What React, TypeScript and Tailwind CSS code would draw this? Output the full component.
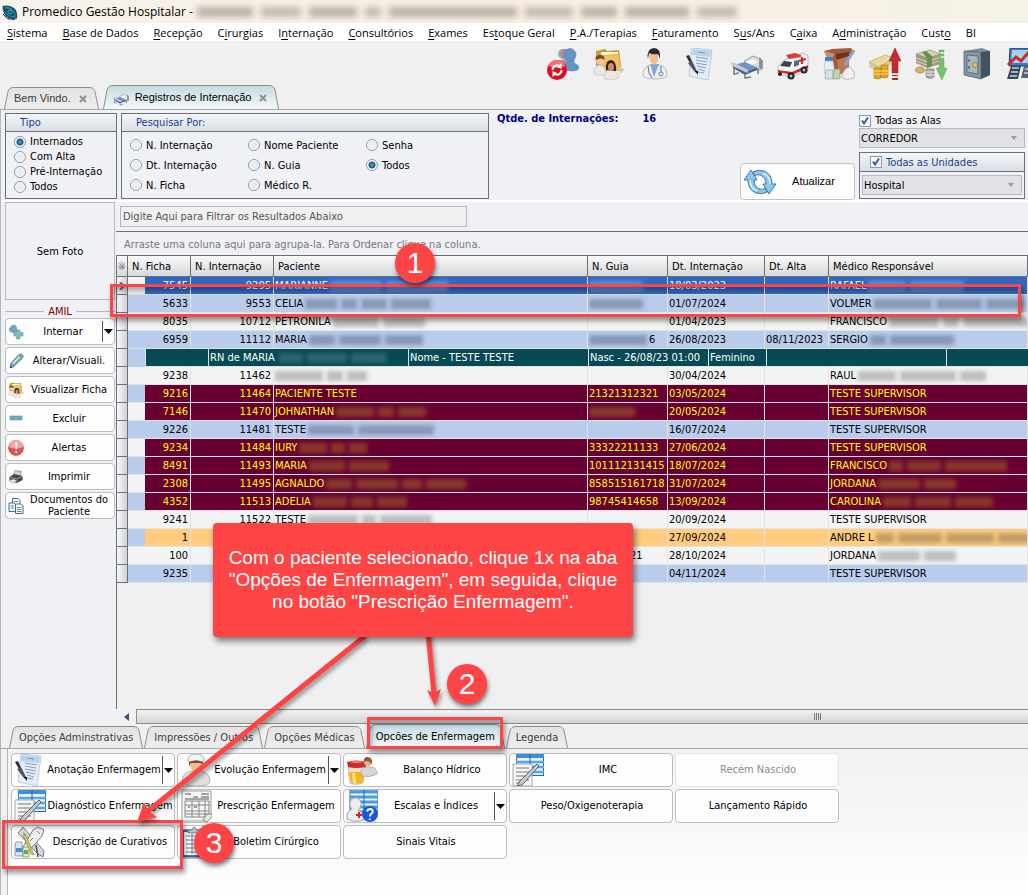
import type { ReactNode } from 'react';

/* ---------- icons ---------- */

const Svg = ({ children, className = 'h-8 w-8' }: { children: ReactNode; className?: string }) => (
  <svg viewBox="0 0 32 32" className={`${className} shrink-0`} aria-hidden="true">
    {children}
  </svg>
);

const LogoIcon = () => (
  <Svg className="h-4 w-4">
    <path d="M1 4Q14 1 24 8Q32 14 30 29Q16 32 8 25Q1 17 1 4Z" fill="#0f5570" />
    <path d="M5 8Q16 6 24 17M10 6Q22 8 27 25M6 17Q14 26 26 26" fill="none" stroke="#3c8ba6" strokeWidth="2" />
    <circle cx="16" cy="16" r="4" fill="none" stroke="#6cb4c8" strokeWidth="1.500" />
    <path d="M2 20L10 29L26 31" fill="none" stroke="#0a3346" strokeWidth="2" />
  </Svg>
);

const UsersIcon = () => (
  <Svg>
    <g fill="#8fbf86">
      <circle cx="16" cy="6" r="5" />
      <path d="M11 22Q10 12 17 11L20 22Z" />
    </g>
    <g fill="#b583b4">
      <circle cx="18" cy="6" r="5" />
      <path d="M13 22Q12 12 19 11L22 22Z" />
    </g>
    <g fill="#6593c2" stroke="#507fb0" strokeWidth=".5">
      <path d="M15 22Q14 18 20 15L20 10H27L27 15Q32 17 32 20Q31 23 25 23Z" />
      <ellipse cx="23" cy="7" rx="6" ry="6.500" />
    </g>
    <circle cx="10" cy="22" r="10" fill="#d9101f" />
    <path d="M1.500 18A9 9 0 0 1 18.500 18Q10 22 1.500 18Z" fill="#f0747c" />
    <path d="M5.500 22A4.500 4.500 0 0 1 13 18.500M14.500 22A4.500 4.500 0 0 1 7 25.500" fill="none" stroke="#fff" strokeWidth="2" />
    <path d="M14.500 15V21L10 19ZM5.500 29V23L10 25Z" fill="#fff" />
  </Svg>
);

const FolderPeopleIcon = () => (
  <Svg>
    <path d="M3 3L12 1L14 3L26 2L28 18L8 22L3 18Z" fill="#c99a3c" />
    <path d="M8 4L25 4L25 18L8 20Z" fill="#fff7dc" />
    <path d="M8 8L26 6L28 22L10 24Z" fill="#eec35e" stroke="#c79a3f" strokeWidth=".6" />
    <path d="M1 25Q1 17 7 17Q13 18 13 27H3Z" fill="#e6e9ee" stroke="#aab" strokeWidth=".5" />
    <circle cx="7" cy="12" r="4.500" fill="#f0c39c" />
    <path d="M2.500 12Q2 7 7 7Q12 7 11.500 12Q9 9 2.500 12Z" fill="#7a4a26" />
    <path d="M11 31Q11 22 18 22Q25 22 26 30Q19 33 11 31Z" fill="#f1e3e3" stroke="#bba" strokeWidth=".5" />
    <path d="M13 22Q12 12 18 12Q24 13 23 23Z" fill="#33201b" />
    <ellipse cx="18" cy="19" rx="3" ry="4" fill="#c98e6c" />
    <path d="M26 20L32 21L27 26Z" fill="#d5c7ae" />
  </Svg>
);

const DoctorIcon = () => (
  <Svg>
    <path d="M4 27Q4 18 12 17H20Q28 18 28 27Q27 31 16 31Q5 31 4 27Z" fill="#eceef1" stroke="#a4a8ae" strokeWidth=".7" />
    <path d="M11 16L15 29L20 16Z" fill="#7ca9d9" />
    <path d="M10 6H19V13Q15 20 11 13Z" fill="#edbd93" />
    <path d="M9 11Q7 1 15 0Q22 0 21 11L19 6Q13 7 10 5Z" fill="#25282c" />
    <path d="M9 18Q9 26 13 30M22 18V24M22 24A2 2 0 1 1 21.900 24" fill="none" stroke="#6d747d" strokeWidth="1" />
  </Svg>
);

const DocumentIcon = () => (
  <Svg>
    <path d="M7 0L27 2L23 32L4 28Z" fill="#e3eef8" stroke="#a6bccf" strokeWidth=".7" />
    <path d="M8 1L26 3L25 9L7 7Z" fill="#b5d5ee" />
    <path d="M13 4L20 5M11 9L23 11M11 12L22 14M11 15L22 17M12 18L21 20M13 21L20 23M13 24L19 25" stroke="#7c93a9" strokeWidth=".9" />
    <path d="M1 8L4 7L12 25L10 24Z" fill="#2a3038" />
    <path d="M3 15L7 13L12 23L9 23Z" fill="#4e5864" />
    <path d="M10 23L13 27L13 23Z" fill="#111" />
  </Svg>
);

const BedIcon = ({ className }: { className?: string }) => (
  <Svg className={className}>
    <path d="M13 13L22 8L30 11V22L22 22Z" fill="#d9dcdf" stroke="#8b9095" strokeWidth=".8" />
    <path d="M14 14L22 11L27 14L20 18Z" fill="#f6f8f9" />
    <path d="M2 17L14 14L25 19L14 24Z" fill="#6f93c7" />
    <path d="M2 17L14 24V27L2 20ZM14 24L26 19V22L14 27Z" fill="#47649a" />
    <path d="M0 14L4 15L17 22V25L1 18Z" fill="#c6cbd0" />
    <path d="M3 20V26L8 25M14 27V30L20 29M27 20V26M29 10V20M31 12V21" stroke="#777d83" strokeWidth="1.500" fill="none" />
  </Svg>
);

const AmbulanceIcon = () => (
  <Svg>
    <path d="M1 18L6 13L12 10L26 5L31 8V22L15 29L1 26Z" fill="#f5f5f5" stroke="#999" strokeWidth=".6" />
    <path d="M9 7L18 5L24 7V9L12 11Z" fill="#db3b3b" />
    <path d="M3 18L7 13L15 14L13 19Z" fill="#33434f" />
    <path d="M17 13L22 12V17L17 19Z" fill="#556b79" />
    <path d="M1 22L15 24L31 17V20L15 27L1 24Z" fill="#d82525" />
    <path d="M25 9V16M22 13L29 11" stroke="#dd2525" strokeWidth="2.200" />
    <circle cx="14" cy="28" r="3.500" fill="#222" />
    <circle cx="27" cy="22" r="3.500" fill="#222" />
    <circle cx="3" cy="26" r="2" fill="#222" />
    <circle cx="14" cy="28" r="1.500" fill="#bbb" />
    <circle cx="27" cy="22" r="1.500" fill="#bbb" />
  </Svg>
);

const SuppliesIcon = () => (
  <Svg>
    <path d="M1 3L9 1L28 0L31 5L26 8V25L8 26L5 10Z" fill="#a5593a" />
    <path d="M1 3L12 6L8 12L3 8Z" fill="#c98d6c" />
    <path d="M12 6L26 4L26 8L14 12Z" fill="#6d3422" />
    <path d="M14 12L26 8V24L16 26Z" fill="#bf7754" />
    <rect x="2" y="9" width="8" height="4" fill="#4d7ec1" />
    <path d="M2 13H10L12 25H1Z" fill="#e6edf5" stroke="#9ab" strokeWidth=".5" />
    <path d="M31 2L22 17" stroke="#8aa5c7" strokeWidth="3" />
    <path d="M3 22H10V31H2Z" fill="#d9dee3" stroke="#888" strokeWidth=".5" />
    <path d="M11 21H17V31H10Z" fill="#bcd3a4" stroke="#687" strokeWidth=".5" />
    <path d="M19 27Q22 19 27 19Q33 25 31 30Q24 33 19 30Z" fill="#f1f1f1" stroke="#999" strokeWidth=".6" />
  </Svg>
);

const MoneyUpIcon = () => (
  <Svg>
    <path d="M0 14L16 7L25 10L10 19Z" fill="#ead9a2" stroke="#bda86a" strokeWidth=".7" />
    <path d="M0 14L10 19V24L0 19ZM10 19L25 10V15L10 24Z" fill="#cdb97c" />
    <path d="M0 16L10 21L25 12M0 18L10 23L25 14" stroke="#f4efda" strokeWidth=".7" fill="none" />
    <path d="M5 20H12V30Q8 32 5 30ZM12 17H19V29Q15 31 12 29Z" fill="#e1a51d" stroke="#a8750e" strokeWidth=".6" />
    <path d="M5 23H19M5 26H19" stroke="#f9de7d" strokeWidth="1" />
    <path d="M26 0L32 13H29V25H23V13H20Z" fill="#c62a2f" stroke="#8e181c" strokeWidth=".5" />
    <path d="M23 27H29V28H23ZM23 30H29V32H23Z" fill="#b02328" />
  </Svg>
);

const MoneyDownIcon = () => (
  <Svg>
    <path d="M1 6L15 2L26 6V16L12 20L1 15Z" fill="#a69a7d" />
    <path d="M1 6L15 2L26 6L12 10Z" fill="#d8cfb4" stroke="#877c61" strokeWidth=".5" />
    <path d="M1 10L12 14L26 9M1 13L12 17L26 12" stroke="#e7e0ca" strokeWidth=".8" fill="none" />
    <path d="M7 4L11 3L17 8V18L12 20V10Z" fill="#5f9449" />
    <ellipse cx="5" cy="22" rx="4.500" ry="3" fill="#cfb468" stroke="#8e7734" strokeWidth=".6" />
    <path d="M11 21H19V29Q15 32 11 29Z" fill="#a9aaa6" stroke="#666" strokeWidth=".6" />
    <path d="M11 24H19M11 27H19" stroke="#eee" strokeWidth="1" />
    <path d="M24 2H29V4H24ZM24 6H29V8H24ZM24 10H29V20H32L27 32L21 20H24Z" fill="#75c46b" stroke="#4c9a45" strokeWidth=".4" />
  </Svg>
);

const SafeIcon = () => (
  <Svg>
    <path d="M3 3L21 0L29 3L29 27L20 31L3 27Z" fill="#7d909f" />
    <path d="M20 4L29 3V27L20 31Z" fill="#43525f" />
    <path d="M3 3L20 4V31L3 27Z" fill="#8496a6" stroke="#4d5c69" strokeWidth=".7" />
    <path d="M6 7L17 8V26L6 24Z" fill="#aab7c2" stroke="#52616d" strokeWidth=".8" />
    <circle cx="14" cy="17" r="2.500" fill="#e5c26b" stroke="#8e6d23" strokeWidth=".7" />
    <path d="M8 11V14M8 18V21" stroke="#44525e" strokeWidth="1.200" />
  </Svg>
);

const ChartIcon = () => (
  <Svg>
    <path d="M3 0H32V18H2Z" fill="#3d79c4" stroke="#1f3f66" />
    <path d="M5 2H32V15H4Z" fill="#9ed6f3" />
    <path d="M1 17L9 9L14 13L21 5L32 12" fill="none" stroke="#d22a23" strokeWidth="3" />
    <path d="M4 18H14L11 31H0Z" fill="#3a4653" />
    <path d="M5 20H12M4 24H11M3 28H10" stroke="#c7d2dd" strokeWidth="1.500" />
    <path d="M17 18H31V30H14Z" fill="#56616d" />
    <path d="M18 21H30M17 25H30" stroke="#ccd" strokeWidth="1.500" />
  </Svg>
);

const RefreshIcon = () => (
  <Svg>
    <g fill="#8cc4ea" stroke="#34719f" strokeWidth=".9" strokeLinejoin="round">
      <path d="M7 4L13 14H10Q10 21 16 23Q19 24 21 22L23 26Q18 29 12 27Q4 24 4 14H0Z" />
      <path d="M25 28L19 18H22Q22 11 16 9Q13 8 11 10L9 6Q14 3 20 5Q28 8 28 18H32Z" />
    </g>
    <path d="M6 14Q6 22 13 25M26 18Q26 10 19 7" stroke="#d8effc" strokeWidth="1.500" fill="none" />
  </Svg>
);

const NurseIcon = () => (
  <Svg>
    <path d="M2 28Q2 19 11 17H21Q30 19 30 28Q29 32 16 32Q3 32 2 28Z" fill="#dfe0df" stroke="#a2a2a0" strokeWidth=".8" />
    <path d="M12 16L16 22L20 16Z" fill="#e3ab7b" />
    <path d="M10 7H22V12Q20 19 16 19Q12 19 10 12Z" fill="#edbf95" />
    <path d="M8 6Q8 0 16 0Q24 0 24 6L23 8Q16 5 9 8Z" fill="#f3f3f1" stroke="#9c9c98" strokeWidth=".8" />
    <path d="M9 8Q16 5 23 8V12L21 9H11L9 12Z" fill="#7f4a28" />
  </Svg>
);

const CupPersonIcon = () => (
  <Svg>
    <path d="M2 13H19L17 29Q10 32 4 29Z" fill="#f3e2cf" stroke="#b7a48e" strokeWidth=".7" />
    <path d="M3 18H18L17 28Q10 31 5 28Z" fill="#f6b51e" />
    <path d="M6 19H9L10 29H7Z" fill="#ffe483" />
    <path d="M1 8Q10 5 20 8V13Q10 15 2 13Z" fill="#d12a2a" />
    <path d="M3 8Q10 6 18 8Q10 10 3 8Z" fill="#ee8079" />
    <path d="M15 19Q15 14 20 13H26Q31 14 31 20Q24 24 16 22Z" fill="#d5d7d9" stroke="#989b9f" strokeWidth=".7" />
    <circle cx="22" cy="8" r="4" fill="#e3b083" />
    <path d="M18 8Q17 3 22 3Q27 4 26 10Q22 5 18 8Z" fill="#855b38" />
  </Svg>
);

const TableNotesIcon = () => (
  <Svg>
    <rect x="4.500" y=".5" width="27" height="21" fill="#e9f5ff" stroke="#2268b1" />
    <rect x="4" y="0" width="28" height="4" fill="#3d8ed6" />
    <path d="M4 8H32M4 13H32M4 18H32" stroke="#58a5e8" strokeWidth="2.500" />
    <path d="M18 0V22" stroke="#2268b1" />
    <path d="M1 10H20V32H1Z" fill="#f4f4f4" stroke="#979797" strokeWidth=".8" />
    <path d="M4 14H17M4 18H17M4 22H17M4 26H17M4 29H12" stroke="#777" />
    <path d="M25 10L27 12L10 31L5 32L8 27Z" fill="#c6cbd0" stroke="#4b5157" strokeWidth=".9" />
  </Svg>
);

const FormIcon = () => (
  <Svg>
    <path d="M2 1H31V26L26 31H2Z" fill="#f5f5f4" stroke="#9b9b98" />
    <path d="M5 4H11M13 7H18M21 4H29M21 7H29M5 9H29" stroke="#555" />
    <path d="M5 11H29V27H5ZM5 15H29M5 21H29M5 24H29M12 11V27M19 11V27M25 11V27" fill="none" stroke="#868684" />
    <path d="M8 17H10M14 17H17" stroke="#333" />
    <path d="M23 30L27 24H32V27L27 32Z" fill="#e5e5e3" stroke="#777" strokeWidth=".8" />
  </Svg>
);

const ClipboardIcon = () => (
  <Svg>
    <rect x="1" y="4" width="26" height="27" rx="1" fill="#4d71a9" stroke="#294a7c" />
    <path d="M4 6H24V29H4Z" fill="#f8fafc" />
    <path d="M6 10H22M6 14H22M6 18H22M6 22H22M6 26H22M12 8V28" stroke="#707b8b" />
    <path d="M8 4H12Q14 -2 16 4H20V7H8Z" fill="#b9c0c8" stroke="#667" strokeWidth=".8" />
    <path d="M2 10V28" stroke="#19304f" strokeWidth="1.500" />
  </Svg>
);

const PatientHelpIcon = () => (
  <Svg>
    <rect x="4" y="0" width="28" height="21" fill="#e9f5ff" stroke="#2268b1" />
    <path d="M4 2H32M4 7H32M4 12H32M4 17H32" stroke="#4c9ae0" strokeWidth="2.800" />
    <path d="M18 0V22" stroke="#2268b1" />
    <path d="M1 29Q0 22 6 19Q3 17 4 12Q6 7 11 8Q16 10 15 16Q14 19 12 20Q18 22 18 30Q8 33 1 29Z" fill="#eceded" stroke="#9fa3a7" />
    <path d="M13 22V28M10 25H16" stroke="#e11d1d" strokeWidth="2" />
    <circle cx="24" cy="24" r="8" fill="#1559e0" />
    <path d="M21 21.500Q21.500 19 24.500 19Q27.500 19.500 26.500 22.500Q24 24 24 26.500M23.800 28.500V30" stroke="#fff" strokeWidth="1.900" fill="none" />
  </Svg>
);

const ToolsIcon = () => (
  <Svg>
    <path d="M4 7L9 1L30 25L29 31L24 28Z" fill="#d5d7d9" stroke="#777b80" />
    <path d="M19 4L24 1L30 4L28 10L12 28L6 26Z" fill="#eceded" stroke="#777b80" />
    <path d="M23 5L26 8M9 7L12 9M19 12L16 15" stroke="#777b80" />
    <path d="M9 9L12 9L20 29L17 28Z" fill="#e3c45b" stroke="#8b7c42" strokeWidth=".7" />
    <path d="M2 16H8V19L9 30H1V19Z" fill="#d8e5f2" stroke="#758ca4" strokeWidth=".8" />
    <rect x="2" y="22" width="6" height="4" fill="#4c8fd0" />
    <path d="M9 21H15V31H9Z" fill="#d7ebd0" stroke="#7b9270" strokeWidth=".8" />
    <rect x="10" y="24" width="4" height="4" fill="#64a84f" />
    <path d="M22 19L24 31" stroke="#44484c" strokeWidth="1.500" />
  </Svg>
);

const AddIcon = () => (
  <Svg className="h-4 w-4">
    <path d="M7 3L13 1L18 6V13L13 18L6 17L1 11Z" fill="#6fa5b5" />
    <path d="M17 12H24V17H30V24H24V30H17V24H12V17H17Z" fill="#86b9c8" stroke="#4e8597" />
  </Svg>
);

const PencilIcon = () => (
  <Svg className="h-4 w-4">
    <path d="M4 30L6 20L22 3Q27 0 30 5Q31 8 28 11L12 27Z" fill="#78a9b7" stroke="#3f7686" strokeWidth="1.500" />
    <path d="M10 21L23 8" stroke="#e3f1f4" strokeWidth="3" />
    <path d="M4 30L5 25L9 29Z" fill="#2d4f5a" />
  </Svg>
);

const MinusIcon = () => (
  <Svg className="h-4 w-4">
    <rect x="4" y="10" width="24" height="8" fill="#6ea9b8" stroke="#4f8d9e" />
  </Svg>
);

const AlertIcon = () => (
  <Svg className="h-4 w-4">
    <circle cx="16" cy="16" r="15" fill="#e2504f" stroke="#c33" />
    <path d="M2 14A14 14 0 0 1 30 14Q16 20 2 14Z" fill="#f4a3a0" />
    <path d="M14 5H19L18 19H15ZM15 22H18V26H15Z" fill="#fff" />
  </Svg>
);

const PrinterIcon = () => (
  <Svg className="h-4 w-4">
    <path d="M14 3L27 5L24 15L11 13Z" fill="#ccd3d8" stroke="#555" />
    <path d="M3 16L12 10L29 14V22L18 28L3 23Z" fill="#40474d" />
    <path d="M3 16L18 20L29 14" stroke="#9aa2a8" strokeWidth="2" fill="none" />
    <path d="M2 23L11 20L19 24L9 28Z" fill="#e9ecee" stroke="#777" />
  </Svg>
);

const CopiesIcon = () => (
  <Svg className="h-4 w-4">
    <g fill="#f7fafc" stroke="#496b88" strokeWidth="2">
      <path d="M9 1H20L24 5V20H9Z" />
      <path d="M2 10H12L16 14V27H2Z" />
      <path d="M15 12H25L30 16V31H15Z" />
    </g>
    <path d="M12 7H20M5 16H12M5 20H12M18 19H27M18 23H27M18 27H27" stroke="#6b8ba5" strokeWidth="2" />
  </Svg>
);

/* ---------- data ---------- */

const menus = [
  ['', 'S', 'istema'],
  ['', 'B', 'ase de Dados'],
  ['', 'R', 'ecepção'],
  ['C', 'i', 'rurgias'],
  ['I', 'n', 'ternação'],
  ['', 'C', 'onsultórios'],
  ['', 'E', 'xames'],
  ['Es', 't', 'oque Geral'],
  ['', 'P', '.A./Terapias'],
  ['', 'F', 'aturamento'],
  ['S', 'u', 's/Ans'],
  ['C', 'a', 'ixa'],
  ['A', 'd', 'ministração'],
  ['Cust', 'o', ''],
  ['BI', '', ''],
];

const toolbar = [
  { name: 'Usuários', icon: <UsersIcon /> },
  { name: 'Pacientes', icon: <FolderPeopleIcon /> },
  { name: 'Médicos', icon: <DoctorIcon /> },
  { name: 'Prontuário', icon: <DocumentIcon /> },
  { name: 'Internação', icon: <BedIcon /> },
  { name: 'Pronto Atendimento', icon: <AmbulanceIcon /> },
  { name: 'Estoque', icon: <SuppliesIcon /> },
  { name: 'Contas a Pagar', icon: <MoneyUpIcon /> },
  { name: 'Contas a Receber', icon: <MoneyDownIcon /> },
  { name: 'Caixa', icon: <SafeIcon /> },
  { name: 'Gráficos', icon: <ChartIcon /> },
];

type Tone = 'selected' | 'blue' | 'white' | 'wine' | 'amber';

type Row = {
  ficha: string;
  internacao: string;
  paciente: string;
  pacienteMask?: number[];
  guia?: string;
  guiaMask?: number[];
  guiaEnd?: string;
  data: string;
  alta?: string;
  medico: string;
  medicoMask?: number[];
  tone: Tone;
  lead?: 'blue' | 'white';
};

const rows: Row[] = [
  { ficha: '7545', internacao: '9295', paciente: 'MARIANNE', pacienteMask: [52, 62], guiaMask: [54], data: '18/03/2023', medico: 'RAFAEL', medicoMask: [38, 54], tone: 'selected', lead: 'white' },
  { ficha: '5633', internacao: '9553', paciente: 'CELIA', pacienteMask: [32, 16, 26, 40], guiaMask: [54], data: '01/07/2024', medico: 'VOLMER', medicoMask: [58, 46, 38], tone: 'blue' },
  { ficha: '8035', internacao: '10712', paciente: 'PETRONILA', pacienteMask: [46, 42], data: '01/04/2023', medico: 'FRANCISCO', medicoMask: [50, 16, 68], tone: 'white' },
  { ficha: '6959', internacao: '11112', paciente: 'MARIA', pacienteMask: [26, 42, 38], guiaMask: [58], guiaEnd: '6', data: '26/08/2023', alta: '08/11/2023', medico: 'SERGIO', medicoMask: [16, 64], tone: 'blue' },
  { ficha: '9238', internacao: '11462', paciente: '', pacienteMask: [48, 16, 20], data: '30/04/2024', medico: 'RAUL', medicoMask: [38, 56, 26], tone: 'white' },
  { ficha: '9216', internacao: '11464', paciente: 'PACIENTE TESTE', guia: '21321312321', data: '03/05/2024', medico: 'TESTE SUPERVISOR', tone: 'wine', lead: 'blue' },
  { ficha: '7146', internacao: '11470', paciente: 'JOHNATHAN', pacienteMask: [38, 16, 28], guiaMask: [46], data: '20/05/2024', medico: 'TESTE SUPERVISOR', tone: 'wine', lead: 'white' },
  { ficha: '9226', internacao: '11481', paciente: 'TESTE', pacienteMask: [46, 76], data: '16/07/2024', medico: 'TESTE SUPERVISOR', tone: 'blue' },
  { ficha: '9234', internacao: '11484', paciente: 'IURY', pacienteMask: [28, 14, 18], guia: '33322211133', data: '27/06/2024', medico: 'TESTE SUPERVISOR', tone: 'wine', lead: 'white' },
  { ficha: '8491', internacao: '11493', paciente: 'MARIA', pacienteMask: [36, 40], guia: '101112131415', data: '18/07/2024', medico: 'FRANCISCO', medicoMask: [14, 34, 62], tone: 'wine', lead: 'blue' },
  { ficha: '2308', internacao: '11495', paciente: 'AGNALDO', pacienteMask: [26, 42, 20, 40], guia: '858515161718', data: '31/07/2024', medico: 'JORDANA', medicoMask: [42, 32], tone: 'wine', lead: 'white' },
  { ficha: '4352', internacao: '11513', paciente: 'ADELIA', pacienteMask: [34, 22, 30], guia: '98745414658', data: '13/09/2024', medico: 'CAROLINA', medicoMask: [28, 36, 38], tone: 'wine', lead: 'blue' },
  { ficha: '9241', internacao: '11522', paciente: 'TESTE', pacienteMask: [50, 14, 52], data: '20/09/2024', medico: 'TESTE SUPERVISOR', tone: 'white' },
  { ficha: '1', internacao: '', paciente: '', data: '27/09/2024', medico: 'ANDRE L', medicoMask: [18, 44, 48, 40], tone: 'amber', lead: 'blue' },
  { ficha: '100', internacao: '', paciente: '', guiaMask: [39], guiaEnd: '21', data: '28/10/2024', medico: 'JORDANA', medicoMask: [42, 32], tone: 'white' },
  { ficha: '9235', internacao: '', paciente: '', data: '04/11/2024', medico: 'TESTE SUPERVISOR', tone: 'blue' },
];

const toneClass: Record<Tone, string> = {
  selected: 'bg-[#2f67c5] text-white',
  blue: 'bg-[#b9ccec] text-black',
  white: 'bg-[#f2f4f4] text-black',
  wine: 'bg-[#690032] text-[#ffff00]',
  amber: 'bg-[#ffcc80] text-black',
};

const maskClass: Record<Tone, string> = {
  selected: 'bg-[#7d9fdc]',
  blue: 'bg-[#7282a0]',
  white: 'bg-[#a5a7a8]',
  wine: 'bg-[#945026]',
  amber: 'bg-[#a98a5c]',
};

const sideButtons = [
  { label: 'Internar', icon: <AddIcon />, menu: true },
  { label: 'Alterar/Visuali.', icon: <PencilIcon /> },
  { label: 'Visualizar Ficha', icon: <span className="h-4 w-4 shrink-0 [&>svg]:h-4 [&>svg]:w-4"><FolderPeopleIcon /></span> },
  { label: 'Excluir', icon: <MinusIcon /> },
  { label: 'Alertas', icon: <AlertIcon /> },
  { label: 'Imprimir', icon: <PrinterIcon /> },
  { label: 'Documentos do Paciente', icon: <CopiesIcon /> },
];

const bottomTabs = ['Opções Adminstrativas', 'Impressões / Outros', 'Opções Médicas', 'Opcões de Enfermagem', 'Legenda'];

const nursingButtons = [
  { label: 'Anotação Enfermagem', icon: <DocumentIcon />, menu: true },
  { label: 'Evolução Enfermagem', icon: <NurseIcon />, menu: true },
  { label: 'Balanço Hídrico', icon: <CupPersonIcon /> },
  { label: 'IMC', icon: <TableNotesIcon /> },
  { label: 'Recém Nascido', disabled: true },
  { label: 'Diagnóstico Enfermagem', icon: <TableNotesIcon /> },
  { label: 'Prescrição Enfermagem', icon: <FormIcon /> },
  { label: 'Escalas e Índices', icon: <PatientHelpIcon />, menu: true },
  { label: 'Peso/Oxigenoterapia' },
  { label: 'Lançamento Rápido' },
  { label: 'Descrição de Curativos', icon: <ToolsIcon /> },
  { label: 'Boletim Cirúrgico', icon: <ClipboardIcon /> },
  { label: 'Sinais Vitais' },
];

/* ---------- controls ---------- */

const Radio = ({ name, label, checked }: { name: string; label: string; checked?: boolean }) => (
  <label className="flex items-center gap-1 whitespace-nowrap">
    <input
      type="radio"
      name={name}
      defaultChecked={checked}
      className="h-3 w-3 shrink-0 appearance-none rounded-full border border-[#8e9aa8] bg-[#e9edf3] shadow-[inset_0_0_0_1px_#fff] checked:bg-[radial-gradient(circle,#4fb0dc_0,#1c557c_3px,#e9f2f8_4px)]"
    />
    {label}
  </label>
);

const Check = ({ label }: { label: string }) => (
  <label className="flex items-center gap-1 whitespace-nowrap">
    <span className="grid h-3 w-3 shrink-0">
      <input type="checkbox" defaultChecked className="col-start-1 row-start-1 h-3 w-3 appearance-none border border-[#8e9aa8] bg-[#f3f6fa]" />
      <svg viewBox="0 0 12 12" className="pointer-events-none col-start-1 row-start-1 h-3 w-3" aria-hidden="true">
        <path d="M3 5.500L5 8.500L9 2.500" fill="none" stroke="#3b5f9b" strokeWidth="2" />
      </svg>
    </span>
    {label}
  </label>
);

const Combo = ({ label, value }: { label: string; value: string }) => (
  <div className="grid">
    <select
      aria-label={label}
      className="col-start-1 row-start-1 h-5 w-full appearance-none border border-[#b5b8c0] bg-[#e1e2e6] px-px text-black"
    >
      <option>{value}</option>
    </select>
    <svg viewBox="0 0 6 4" className="pointer-events-none col-start-1 row-start-1 mr-2 h-1 w-1.5 self-center justify-self-end" aria-hidden="true">
      <path d="M0 0H6L3 4Z" fill="#9a9ca2" />
    </svg>
  </div>
);

const groupTitle = 'border-b border-[#6d6f78] bg-linear-to-b from-[#f4f6f8] to-[#d9dee6] text-[#15428b]';

const Tab = ({ active, children }: { active?: boolean; children: ReactNode }) => {
  const id = active ? 'tab-on' : 'tab-off';
  const edge = active ? 'h-6' : 'h-[22px]';
  return (
    <div className={`flex items-stretch ${edge} ${active ? 'text-black' : 'text-[#3c3c3c]'}`}>
      <svg viewBox="0 0 10 24" preserveAspectRatio="none" className={`w-2.5 shrink-0 ${edge}`} aria-hidden="true">
        <defs>
          <linearGradient id={id} gradientUnits="userSpaceOnUse" x1="0" y1="0" x2="0" y2="24">
            <stop offset="0" stopColor={active ? '#c4dbe1' : '#e2e2e2'} />
            <stop offset="1" stopColor={active ? '#f4f8fa' : '#eeeeee'} />
          </linearGradient>
        </defs>
        <path d="M.5 24L4 5Q5 .5 10 .5V24Z" fill={`url(#${id})`} />
        <path d="M.5 24L4 5Q5 .5 10 .5" fill="none" stroke="#8c8c8c" />
      </svg>
      <div
        className={`flex items-center border-t border-[#8c8c8c] bg-linear-to-b whitespace-nowrap ${
          active ? 'from-[#c4dbe1] to-[#f4f8fa]' : 'from-[#e2e2e2] to-[#eeeeee]'
        }`}
      >
        {children}
      </div>
      <svg viewBox="0 0 10 24" preserveAspectRatio="none" className={`w-2.5 shrink-0 ${edge}`} aria-hidden="true">
        <path d="M9.500 24L6 5Q5 .5 0 .5V24Z" fill={`url(#${id})`} />
        <path d="M9.500 24L6 5Q5 .5 0 .5" fill="none" stroke="#8c8c8c" />
      </svg>
    </div>
  );
};

const CloseTab = () => (
  <button type="button" aria-label="Fechar aba" className="grid h-3 w-3 place-items-center">
    <svg viewBox="0 0 8 8" className="h-2 w-2">
      <path d="M1 1L7 7M7 1L1 7" stroke="#8d8d8d" strokeWidth="2" />
    </svg>
  </button>
);

const ActionButton = ({
  label,
  icon,
  menu,
  disabled,
  className,
}: {
  label: string;
  icon?: ReactNode;
  menu?: boolean;
  disabled?: boolean;
  className: string;
}) => (
  <div className={`flex items-stretch rounded-sm border bg-[#fdfdfd] ${disabled ? 'border-[#e4e4e4]' : 'border-[#bdbdbd]'} ${className}`}>
    <button type="button" disabled={disabled} className="flex min-w-0 flex-1 items-center pl-0.5 disabled:text-[#8c8c8c]">
      {icon}
      <span className="min-w-0 flex-1 text-center leading-3">{label}</span>
    </button>
    {menu && (
      <button type="button" aria-label={`Mais opções de ${label}`} className="my-0.5 grid w-3 shrink-0 place-items-center border-l border-[#555]">
        <svg viewBox="0 0 9 5" className="h-[5px] w-[9px]">
          <path d="M0 0H9L4.500 5Z" fill="#000" />
        </svg>
      </button>
    )}
  </div>
);

const Masked = ({ words, tone }: { words: number[]; tone: Tone }) => (
  <span className="flex shrink-0 gap-1 blur-[2px]" aria-hidden="true">
    {words.map((width, i) => (
      <span key={i} className={`h-2.5 opacity-70 ${maskClass[tone]}`} style={{ width }} />
    ))}
  </span>
);

const Cell = ({ text, words, end, tone }: { text?: string; words?: number[]; end?: string; tone: Tone }) => (
  <td className={`overflow-hidden border-r border-b border-[#e3e3e3] px-px ${toneClass[tone]}`}>
    <div className="flex items-center gap-0.5 whitespace-nowrap">
      {text}
      {words && <Masked words={words} tone={tone} />}
      {end}
    </div>
  </td>
);

const indicator = 'border-r border-b border-[#6d6f78] bg-linear-to-r from-[#f8f8f8] to-[#cfd2d6]';

const headerCell = 'border-r border-y border-[#6d6f78] pl-1 text-left font-normal whitespace-nowrap';

const GridRow = ({ row, first }: { row: Row; first?: boolean }) => (
  <tr className="h-[18px]">
    <td className={`p-0 ${indicator}`}>
      {first && (
        <svg viewBox="0 0 6 8" className="mx-auto h-2 w-1.5" aria-hidden="true">
          <path d="M1 0L5 4L1 8" fill="none" stroke="#667" strokeWidth="2" />
        </svg>
      )}
    </td>
    <td className={`border-b border-[#e3e3e3] p-0 ${toneClass[row.lead ?? row.tone]}`} />
    <td className={`border-r border-b border-[#e3e3e3] pr-0.5 text-right ${toneClass[row.tone]}`}>{row.ficha}</td>
    <td className={`border-r border-b border-[#e3e3e3] pr-0.5 text-right ${toneClass[row.tone]}`}>{row.internacao}</td>
    <Cell text={row.paciente} words={row.pacienteMask} tone={row.tone} />
    <Cell text={row.guia} words={row.guiaMask} end={row.guiaEnd} tone={row.tone} />
    <Cell text={row.data} tone={row.tone} />
    <Cell text={row.alta} tone={row.tone} />
    <Cell text={row.medico} words={row.medicoMask} tone={row.tone} />
  </tr>
);

const NewbornRow = () => (
  <tr className="h-[18px]">
    <td className={`p-0 ${indicator}`} />
    <td className="bg-[#b9ccec] p-0" />
    <td colSpan={7} className="overflow-hidden p-0">
      <div className="flex h-[18px] items-stretch border-b border-[#e3e3e3] bg-[#054a55] whitespace-nowrap text-white [&>span]:flex [&>span]:shrink-0 [&>span]:items-center [&>span]:border-l [&>span]:border-[#e3e3e3] [&>span]:px-px">
        <span className="w-[63px]" />
        <span className="w-[200px] gap-1">
          RN de MARIA
          <i className="flex gap-1 blur-[2px]">
            <b className="h-2.5 w-6 bg-[#2b6670]" />
            <b className="h-2.5 w-10 bg-[#2b6670]" />
            <b className="h-2.5 w-9 bg-[#2b6670]" />
          </i>
        </span>
        <span className="w-[180px]">Nome - TESTE TESTE</span>
        <span className="w-[120px]">Nasc - 26/08/23 01:00</span>
        <span className="w-[58px]">Feminino</span>
        <span className="w-[180px]" />
        <span className="w-20" />
      </div>
    </td>
  </tr>
);

const badge =
  'absolute grid h-10 w-10 place-items-center rounded-full bg-[#fe4444] font-["Liberation_Sans",sans-serif] text-[30px] leading-none text-white shadow-[1px_3px_4px_rgba(0,0,0,0.5)]';
const frame = 'pointer-events-none absolute border-[#fe4444] shadow-[2px_4px_5px_rgba(0,0,0,0.4),inset_2px_4px_5px_rgba(0,0,0,0.3)]';

const App = () => {
  return (
    <div className='relative flex min-h-screen flex-col overflow-hidden bg-[#f0f0f0] font-["DejaVu_Sans_Condensed","DejaVu_Sans",sans-serif] text-[11px] leading-[15px] text-black'>
      <header className='font-["Open_Sans",sans-serif]'>
        <div className="flex h-[23px] items-center gap-1 bg-linear-to-r from-[#f6f2ec] via-[#faeee1] to-[#f5f2e8] pl-0.5">
          <LogoIcon />
          <h1 className="text-xs whitespace-nowrap">Promedico Gestão Hospitalar -</h1>
          <div className="flex gap-2 blur-[3px]" aria-hidden="true">
            <span className="h-2.5 w-14 bg-[#b9b1a8]" />
            <span className="h-2.5 w-10 bg-[#c2bab0]" />
            <span className="h-2.5 w-12 bg-[#b9b1a8]" />
            <span className="h-2.5 w-4 bg-[#c2bab0]" />
            <span className="h-2.5 w-32 bg-[#b9b1a8]" />
            <span className="h-2.5 w-12 bg-[#c2bab0]" />
            <span className="h-2.5 w-9 bg-[#b9b1a8]" />
            <span className="h-2.5 w-16 bg-[#b9b1a8]" />
            <span className="h-2.5 w-10 bg-[#c2bab0]" />
          </div>
        </div>
        <nav className="flex h-[18px] items-center gap-[15px] bg-white pl-[7px]">
          {menus.map(([before, key, after]) => (
            <button key={before + key + after} type="button" className="whitespace-nowrap">
              {before}
              <u className="underline-offset-2">{key}</u>
              {after}
            </button>
          ))}
        </nav>
      </header>

      {/* toolbar and page tabs */}
      <div className="flex h-11 gap-3.5 overflow-hidden pt-[7px] pl-[547px]">
        {toolbar.map((item) => (
          <button key={item.name} type="button" aria-label={item.name} className="h-8 w-8 shrink-0">
            {item.icon}
          </button>
        ))}
      </div>
      <div className='flex items-end gap-1 border-b border-[#a8a8a8] pl-1 font-["Liberation_Sans",sans-serif]'>
        <Tab>
          <button type="button" className="mr-1.5">Bem Vindo.</button>
          <CloseTab />
        </Tab>
        <Tab active>
          <BedIcon className="mr-1.5 h-4 w-4" />
          <button type="button" className="mr-1.5">Registros de Internação</button>
          <CloseTab />
        </Tab>
      </div>

      <main className="flex flex-1 flex-col border-l border-[#b5b5b5] bg-[#eff1f4]">
        {/* search filters */}
        <section className="flex h-[92px] items-start gap-1 border-b-2 border-white pt-[3px] pr-[3px] pl-1">
          <div role="radiogroup" aria-labelledby="tipo" className="h-[86px] w-[112px] shrink-0 border border-[#6d6f78]">
            <h2 id="tipo" className={`h-[18px] pl-3.5 leading-[18px] ${groupTitle}`}>Tipo</h2>
            <div className="flex flex-col px-2 pt-0.5">
              <Radio name="tipo" label="Internados" checked />
              <Radio name="tipo" label="Com Alta" />
              <Radio name="tipo" label="Pré-Internação" />
              <Radio name="tipo" label="Todos" />
            </div>
          </div>
          <div role="radiogroup" aria-labelledby="pesquisa" className="h-[86px] w-[368px] shrink-0 border border-[#6d6f78]">
            <h2 id="pesquisa" className={`h-[18px] pl-3.5 leading-[18px] ${groupTitle}`}>Pesquisar Por:</h2>
            <div className="grid grid-flow-col grid-cols-[118px_118px_auto] grid-rows-[20px_20px_20px] px-2 pt-[3px]">
              <Radio name="pesquisa" label="N. Internação" />
              <Radio name="pesquisa" label="Dt. Internação" />
              <Radio name="pesquisa" label="N. Ficha" />
              <Radio name="pesquisa" label="Nome Paciente" />
              <Radio name="pesquisa" label="N. Guia" />
              <Radio name="pesquisa" label="Médico R." />
              <Radio name="pesquisa" label="Senha" />
              <Radio name="pesquisa" label="Todos" checked />
            </div>
          </div>
          <div className="flex gap-6 pl-1 leading-3 font-bold whitespace-nowrap text-[#000080]">
            <span>Qtde. de Internações:</span>
            <span>16</span>
          </div>
          <button
            type="button"
            className='mr-0 ml-auto flex h-[37px] w-[115px] shrink-0 items-center self-end rounded-sm border border-[#c3c3c3] bg-[#fdfdfd] px-[3px] font-["Liberation_Sans",sans-serif]'
          >
            <RefreshIcon />
            <span className="flex-1 text-center">Atualizar</span>
          </button>
          <div className="flex w-[166px] shrink-0 flex-col">
            <Check label="Todas as Alas" />
            <Combo label="Ala" value="CORREDOR" />
            <div className="mt-1 border border-[#6d6f78]">
              <div className={`flex h-[19px] items-center pl-2.5 ${groupTitle}`}>
                <Check label="Todas as Unidades" />
              </div>
              <div className="px-0.5 py-[3px]">
                <Combo label="Unidade" value="Hospital" />
              </div>
            </div>
          </div>
        </section>

        <div className="flex flex-1">
          <aside className="flex w-[115px] shrink-0 flex-col gap-0.5 pr-px pl-1">
            <div className="grid h-[98px] place-items-center border border-[#b5b8c0]">Sem Foto</div>
            <div className="flex h-3.5 items-center gap-1 pt-1 text-[#800000]">
              <hr className="flex-1 border-[#b5b8c0]" />
              AMIL
              <hr className="flex-1 border-[#b5b8c0]" />
            </div>
            {sideButtons.map((item) => (
              <ActionButton key={item.label} {...item} className="h-[27px]" />
            ))}
          </aside>

          <section className="flex min-w-0 flex-1 flex-col">
            <div className="border-b border-[#6d6f78] py-1 pl-1">
              <input
                type="text"
                aria-label="Filtro"
                placeholder="Digite Aqui para Filtrar os Resultados Abaixo"
                className="block h-[21px] w-[347px] border border-[#b5b8c0] bg-[#f0f0f0] px-0.5 placeholder:text-[#555]"
              />
            </div>
            <p className="h-[23px] pl-2 leading-[26px] text-[#777]">Arraste uma coluna aqui para agrupa-la. Para Ordenar clique na coluna.</p>
            <div className="flex-1 overflow-hidden border-l border-[#6d6f78] bg-[#f0f0f0]">
              <table className="w-full table-fixed border-separate border-spacing-0 leading-[17px] [&_td]:py-0">
                <colgroup>
                  <col className="w-[11px]" />
                  <col className="w-[17px]" />
                  <col className="w-[46px]" />
                  <col className="w-[83px]" />
                  <col className="w-[314px]" />
                  <col className="w-20" />
                  <col className="w-[97px]" />
                  <col className="w-16" />
                  <col />
                </colgroup>
                <thead>
                  <tr className="h-[22px] bg-linear-to-b from-[#fafafa] to-[#d5d7da]">
                    <th className="border-r border-y border-[#6d6f78] p-0 font-normal text-[#667]">※</th>
                    <th colSpan={2} className={headerCell}>N. Ficha</th>
                    <th className={headerCell}>N. Internação</th>
                    <th className={headerCell}>Paciente</th>
                    <th className={headerCell}>N. Guia</th>
                    <th className={headerCell}>Dt. Internação</th>
                    <th className={headerCell}>Dt. Alta</th>
                    <th className={headerCell}>Médico Responsável</th>
                  </tr>
                </thead>
                <tbody>
                  {rows.slice(0, 4).map((row, i) => (
                    <GridRow key={row.ficha} row={row} first={i === 0} />
                  ))}
                  <NewbornRow />
                  {rows.slice(4).map((row) => (
                    <GridRow key={row.ficha} row={row} />
                  ))}
                </tbody>
              </table>
            </div>
            {/* horizontal scroll bar */}
            <div className="flex h-[15px] items-stretch">
              <button type="button" aria-label="Rolar para a esquerda" className="grid w-5 place-items-center">
                <svg viewBox="0 0 5 8" className="h-2 w-[5px]">
                  <path d="M5 0V8L0 4Z" fill="#3f5578" />
                </svg>
              </button>
              <div className="flex flex-1 items-center border border-r-0 border-[#8c8c8c] bg-linear-to-b from-[#f2f2f2] to-[#d4d4d4] pl-[677px]">
                <div className="flex gap-px">
                  <i className="h-[7px] w-px bg-[#777]" />
                  <i className="h-[7px] w-px bg-[#777]" />
                  <i className="h-[7px] w-px bg-[#777]" />
                  <i className="h-[7px] w-px bg-[#777]" />
                </div>
              </div>
            </div>
          </section>
        </div>

        {/* option tabs */}
        <div className="flex h-[25px] items-end gap-px border-b border-[#a8a8a8] bg-[#f0f0f0] pl-2">
          {bottomTabs.map((label) => (
            <Tab key={label} active={label === 'Opcões de Enfermagem'}>
              <button type="button">{label}</button>
            </Tab>
          ))}
        </div>
        <section className="ml-1.5 h-[146px] border-l border-[#b5b5b5] bg-linear-to-b from-[#f1f1f1] to-[#fefefe] pt-1 pl-[3px]">
          <div className="grid grid-cols-[repeat(5,164px)] gap-0.5">
            {nursingButtons.map((item) => (
              <ActionButton key={item.label} {...item} className="h-[34px] whitespace-nowrap" />
            ))}
          </div>
        </section>
      </main>

      {/* tutorial notes over the window */}
      <div className={`${frame} top-[284px] right-[7px] left-[110px] h-[33px] border-[3px]`} />
      <div className={`${frame} top-[717px] left-[367px] h-8 w-[136px] border-[3px]`} />
      <div className={`${frame} top-[820px] left-[2px] h-[49px] w-[181px] border-[3px]`} />
      <svg viewBox="0 0 380 220" className="pointer-events-none absolute top-[620px] left-[120px] h-[220px] w-[380px] drop-shadow-[2px_3px_2px_rgba(0,0,0,0.4)]" aria-hidden="true">
        <path d="M245 16L28 191M308 12L314 74" stroke="#fe4444" strokeWidth="5" />
        <path d="M17 202L24 182L28 191L37 197ZM315 86L307 70L314 73L321 69Z" fill="#fe4444" />
      </svg>
      <p className='absolute top-[523px] left-[213px] flex h-[114px] w-[420px] items-center justify-center rounded-sm bg-[#fe4444] text-center font-["Liberation_Sans",sans-serif] text-[19px] leading-[22px] text-white shadow-[2px_4px_6px_rgba(0,0,0,0.5)]'>
        <span>
          Com o paciente selecionado, clique 1x na aba
          <br />
          "Opções de Enfermagem", em seguida, clique
          <br />
          no botão "Prescrição Enfermagem".
        </span>
      </p>
      <div className={`${badge} top-[243px] left-[395px]`}>1</div>
      <div className={`${badge} top-[664px] left-[447px]`}>2</div>
      <div className={`${badge} top-[823px] left-[194px]`}>3</div>
    </div>
  );
};

export default App;
